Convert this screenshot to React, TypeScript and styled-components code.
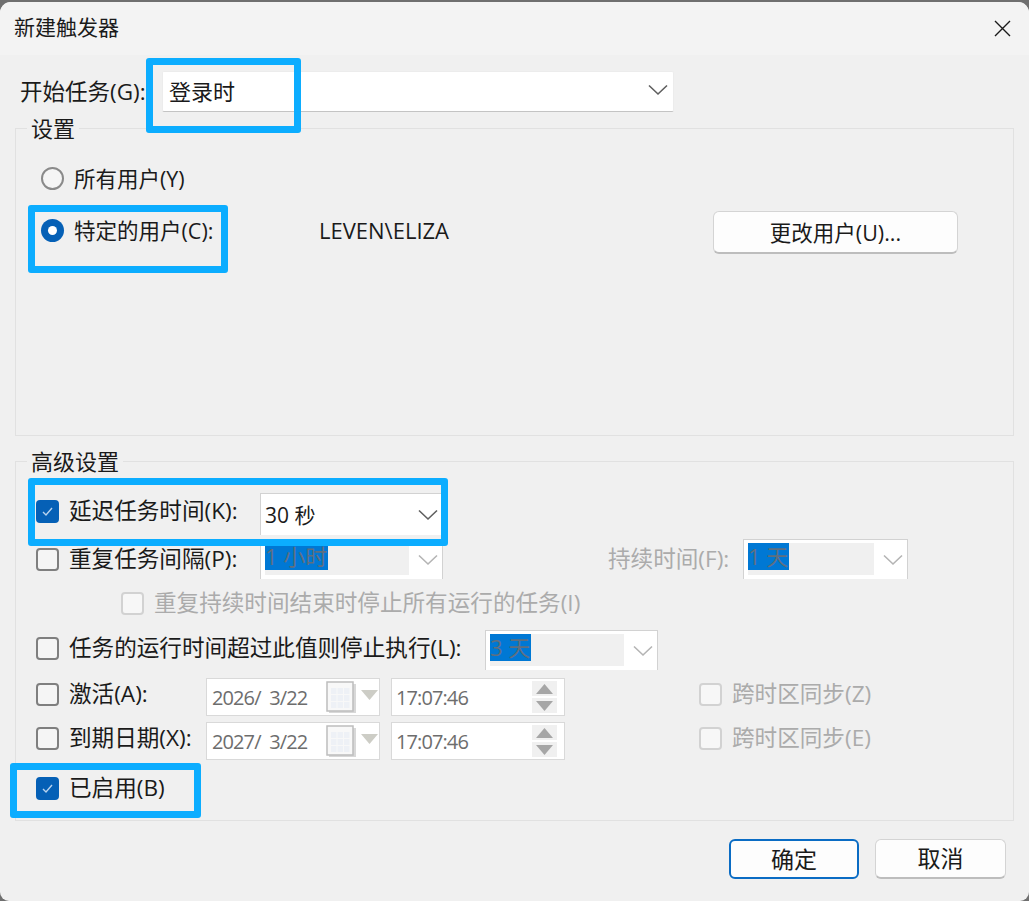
import React from "react";
import styled, { createGlobalStyle } from "styled-components";

const GlobalStyle = createGlobalStyle`
  html, body {
    margin: 0;
    padding: 0;
    background: #6f6f6f;
  }
  body {
    font-family: "Open Sans", "Noto Sans CJK SC", sans-serif;
    font-size: 21px;
    color: #1a1a1a;
  }
`;

const Page = styled.div`
  position: relative;
  width: 1029px;
  height: 901px;
  padding-top: 2px;
  box-sizing: border-box;
  overflow: hidden;
`;

const Window = styled.div`
  height: 899px;
  background: #f0f0f0;
  border-radius: 11px 11px 9px 9px;
  overflow: hidden;
  display: flex;
  flex-direction: column;
`;

const TitleBar = styled.div`
  height: 53px;
  flex: none;
  background: #f3f3f3;
  display: flex;
  align-items: center;
  justify-content: space-between;
  padding: 0 18px 0 14px;
  font-size: 21px;
`;

const TitleText = styled.span`
  position: relative;
  top: -3px;
`;

const Content = styled.div`
  padding: 16px 15px 0;
  display: flex;
  flex-direction: column;
`;

const TaskRow = styled.div`
  height: 41px;
  display: flex;
  align-items: center;
  padding-left: 5px;
`;

const TaskLabel = styled.div`
  width: 142px;
  flex: none;
  position: relative;
  top: -1px;
  font-size: 22.5px;
  white-space: nowrap;
`;

const Select = styled.div`
  width: 512px;
  height: 41px;
  box-sizing: border-box;
  background: #fff;
  border: 1px solid #ececec;
  border-bottom-color: #c4c4c4;
  border-radius: 2px;
  display: flex;
  align-items: center;
  justify-content: space-between;
  padding: 0 5px 3px 6px;
  font-size: 22px;
`;

const Group = styled.div<{ $top: number; $height: number }>`
  margin-top: ${(p) => p.$top}px;
  height: ${(p) => p.$height}px;
  box-sizing: border-box;
  border: 1px solid #e1e1e1;
`;

const Legend = styled.div`
  width: fit-content;
  margin: -15px 0 0 11px;
  padding: 0 4px;
  height: 30px;
  line-height: 28px;
  background: #f0f0f0;
  font-size: 22px;
`;

const RadioRow = styled.div<{ $height: number }>`
  height: ${(p) => p.$height}px;
  display: flex;
  align-items: center;
  padding-left: 25px;
`;

const Radio = styled.span<{ $on?: boolean }>`
  width: 23px;
  height: 23px;
  flex: none;
  box-sizing: border-box;
  border-radius: 50%;
  display: flex;
  align-items: center;
  justify-content: center;
  background: ${(p) => (p.$on ? "#0560b6" : "#f5f5f5")};
  border: ${(p) => (p.$on ? "none" : "2px solid #8a8a8a")};
  &::after {
    content: "";
    display: ${(p) => (p.$on ? "block" : "none")};
    width: 9px;
    height: 9px;
    border-radius: 50%;
    background: #fff;
  }
`;

const RadioLabel = styled.span<{ $width: number }>`
  width: ${(p) => p.$width}px;
  flex: none;
  margin-left: 10px;
  font-size: 21.5px;
  white-space: nowrap;
  position: relative;
  top: -1px;
`;

const UserName = styled.span`
  width: 394px;
  flex: none;
  font-size: 22px;
`;

const Button = styled.button<{ $width: number; $height: number; $primary?: boolean; $drop?: number }>`
  width: ${(p) => p.$width}px;
  height: ${(p) => p.$height}px;
  margin-top: ${(p) => p.$drop ?? 0}px;
  box-sizing: border-box;
  flex: none;
  background: #fdfdfd;
  border: ${(p) => (p.$primary ? "2px solid #0a6cc4" : "1px solid #d4d4d4")};
  border-bottom: ${(p) => (p.$primary ? "2px solid #0a6cc4" : "2px solid #bdbdbd")};
  border-radius: 6px;
  font-family: inherit;
  font-size: ${(p) => (p.$drop ? "21.5px" : "23px")};
  color: #1a1a1a;
  padding: 0 0 ${(p) => (p.$drop ? 0 : 3)}px;
`;

const Rows = styled.div`
  margin-top: 12px;
  padding-left: 20px;
`;

const Row = styled.div<{ $height: number }>`
  height: ${(p) => p.$height}px;
  display: flex;
  align-items: center;
`;

const Box = styled.span<{ $on?: boolean; $off?: boolean }>`
  width: 23px;
  height: 23px;
  flex: none;
  box-sizing: border-box;
  border-radius: 4px;
  display: flex;
  align-items: center;
  justify-content: center;
  background: ${(p) => (p.$on ? "#0560b6" : p.$off ? "#f7f7f7" : "#f5f5f5")};
  border: ${(p) => (p.$on ? "none" : p.$off ? "2px solid #d2d2d2" : "2px solid #7f7f7f")};
`;

const Label = styled.span<{ $width: number; $off?: boolean; $left?: number }>`
  width: ${(p) => p.$width}px;
  flex: none;
  white-space: nowrap;
  margin-left: ${(p) => p.$left ?? 10}px;
  color: ${(p) => (p.$off ? "#ababab" : "#1a1a1a")};
  font-size: 22.6px;
  position: relative;
  top: -2px;
`;

const Combo = styled.div<{ $width: number; $height: number; $shift?: number }>`
  width: ${(p) => p.$width}px;
  height: ${(p) => p.$height}px;
  margin-top: ${(p) => p.$shift ?? 0}px;
  flex: none;
  box-sizing: border-box;
  background: #fff;
  border: 1px solid #d2d2d2;
  border-bottom: none;
  display: flex;
  align-items: center;
  justify-content: space-between;
  padding: 0 4px;
`;

const ComboValue = styled.span`
  position: relative;
  top: -1px;
`;

const ComboField = styled.span<{ $width: number }>`
  width: ${(p) => p.$width}px;
  height: 32px;
  margin-top: -2px;
  background: #f0f0f0;
  display: flex;
`;

const Selected = styled.span`
  background: #0078d4;
  color: #5f6f80;
  height: 27px;
  line-height: 27px;
  padding-right: 1px;
  white-space: nowrap;
  font-size: 22px;
`;

const Picker = styled.div<{ $width: number; $left?: number; $pad?: number }>`
  width: ${(p) => p.$width}px;
  height: 38px;
  margin-top: 6px;
  margin-left: ${(p) => p.$left ?? 0}px;
  flex: none;
  box-sizing: border-box;
  background: #fff;
  border: 1px solid #d9d9d9;
  display: flex;
  align-items: center;
  justify-content: space-between;
  padding: 0 6px 0 ${(p) => p.$pad ?? 5}px;
  color: #6d6d6d;
  font-size: 20px;
  letter-spacing: -0.9px;
  white-space: pre;
`;

const PickerIcons = styled.span`
  display: flex;
  align-items: flex-start;
  gap: 4px;
  margin-right: -5px;
`;

const PickerArrow = styled.span`
  display: flex;
  margin-top: 9px;
`;

const Spinner = styled.span`
  display: flex;
  flex-direction: column;
  gap: 2px;
  margin-right: 1px;
`;

const SpinButton = styled.span`
  width: 25px;
  height: 15px;
  background: #f0f0f0;
  display: flex;
  align-items: center;
  justify-content: center;
`;

const SubRowSpacer = styled.span`
  width: 85px;
  flex: none;
`;

const SyncBox = styled.span`
  margin-left: 134px;
  display: flex;
  align-items: center;
`;

const Footer = styled.div`
  margin-top: 18px;
  padding-right: 8px;
  display: flex;
  justify-content: flex-end;
  gap: 16px;
`;

const Highlight = styled.div<{ $x: number; $y: number; $w: number; $h: number }>`
  position: absolute;
  left: ${(p) => p.$x}px;
  top: ${(p) => p.$y}px;
  width: ${(p) => p.$w}px;
  height: ${(p) => p.$h}px;
  box-sizing: border-box;
  border: 7px solid #0cadff;
  border-radius: 3px;
`;

function Chevron({ off }: { off?: boolean }) {
  return (
    <svg width="20" height="12" viewBox="0 0 20 12">
      <polyline
        points="1,1.5 10,10 19,1.5"
        fill="none"
        stroke={off ? "#b4b4b4" : "#5f5f5f"}
        strokeWidth="1.6"
      />
    </svg>
  );
}

function Check() {
  return (
    <svg width="13" height="11" viewBox="0 0 13 11">
      <polyline points="2,6 5,9 11,2" fill="none" stroke="#b9d3ee" strokeWidth="1.4" />
    </svg>
  );
}

function Close() {
  return (
    <svg width="17" height="17" viewBox="0 0 17 17">
      <path d="M1 1L16 16M16 1L1 16" stroke="#1a1a1a" strokeWidth="1.4" fill="none" />
    </svg>
  );
}

function Calendar() {
  return (
    <svg width="31" height="33" viewBox="0 0 31 33">
      <rect x="3" y="3" width="27" height="29" fill="#d8d8d8" />
      <rect x="1" y="1" width="26" height="29" fill="#f8f8f8" stroke="#bdbdbd" strokeWidth="1.5" />
      {[0, 1, 2].map((r) =>
        [0, 1, 2].map((c) => (
          <rect key={`${r}-${c}`} x={5 + c * 6.5} y={7 + r * 7} width="5.5" height="6" fill="#eef1f6" />
        ))
      )}
    </svg>
  );
}

function Arrow({ up, color }: { up?: boolean; color: string }) {
  return (
    <svg width="17" height="10" viewBox="0 0 17 10">
      <polygon points={up ? "8.5,0 17,10 0,10" : "0,0 17,0 8.5,10"} fill={color} />
    </svg>
  );
}

function DateTime({ date }: { date: string }) {
  return (
    <>
      <Picker $width={174}>
        {date}
        <PickerIcons>
          <Calendar />
          <PickerArrow>
            <Arrow color="#cdcdc6" />
          </PickerArrow>
        </PickerIcons>
      </Picker>
      <Picker $width={174} $left={11} $pad={4}>
        17:07:46
        <Spinner>
          <SpinButton>
            <Arrow up color="#a6a6a6" />
          </SpinButton>
          <SpinButton>
            <Arrow color="#a6a6a6" />
          </SpinButton>
        </Spinner>
      </Picker>
    </>
  );
}

export default function App() {
  return (
    <Page>
      <GlobalStyle />
      <Window>
        <TitleBar>
          <TitleText>新建触发器</TitleText>
          <Close />
        </TitleBar>
        <Content>
          <TaskRow>
            <TaskLabel>开始任务(G):</TaskLabel>
            <Select>
              登录时
              <Chevron />
            </Select>
          </TaskRow>
          <Group $top={16} $height={308}>
            <Legend>设置</Legend>
            <RadioRow $height={68}>
              <Radio />
              <RadioLabel $width={200}>所有用户(Y)</RadioLabel>
            </RadioRow>
            <RadioRow $height={36}>
              <Radio $on />
              <RadioLabel $width={245}>特定的用户(C):</RadioLabel>
              <UserName>LEVEN\ELIZA</UserName>
              <Button $width={245} $height={43} $drop={4}>
                更改用户(U)...
              </Button>
            </RadioRow>
          </Group>
          <Group $top={25} $height={360}>
            <Legend>高级设置</Legend>
            <Rows>
              <Row $height={44}>
                <Box $on>
                  <Check />
                </Box>
                <Label $width={191}>延迟任务时间(K):</Label>
                <Combo $width={183} $height={42} $shift={6}>
                  <ComboValue>30 秒</ComboValue>
                  <Chevron />
                </Combo>
              </Row>
              <Row $height={52}>
                <Box />
                <Label $width={191}>重复任务间隔(P):</Label>
                <Combo $width={183} $height={40}>
                  <ComboField $width={144}>
                    <Selected>1 小时</Selected>
                  </ComboField>
                  <Chevron off />
                </Combo>
                <Label $off $width={135} $left={165}>
                  持续时间(F):
                </Label>
                <Combo $width={165} $height={40}>
                  <ComboField $width={126}>
                    <Selected>1 天</Selected>
                  </ComboField>
                  <Chevron off />
                </Combo>
              </Row>
              <Row $height={36}>
                <SubRowSpacer />
                <Box $off />
                <Label $off $width={440}>
                  重复持续时间结束时停止所有运行的任务(I)
                </Label>
              </Row>
              <Row $height={54}>
                <Box />
                <Label $width={416}>任务的运行时间超过此值则停止执行(L):</Label>
                <Combo $width={173} $height={40} $shift={4}>
                  <ComboField $width={134}>
                    <Selected>3 天</Selected>
                  </ComboField>
                  <Chevron off />
                </Combo>
              </Row>
              <Row $height={38}>
                <Box />
                <Label $width={137}>激活(A):</Label>
                <DateTime date="2026/  3/22" />
                <SyncBox>
                  <Box $off />
                  <Label $off $width={150}>
                    跨时区同步(Z)
                  </Label>
                </SyncBox>
              </Row>
              <Row $height={50}>
                <Box />
                <Label $width={137}>到期日期(X):</Label>
                <DateTime date="2027/  3/22" />
                <SyncBox>
                  <Box $off />
                  <Label $off $width={150}>
                    跨时区同步(E)
                  </Label>
                </SyncBox>
              </Row>
              <Row $height={50}>
                <Box $on>
                  <Check />
                </Box>
                <Label $width={120}>已启用(B)</Label>
              </Row>
            </Rows>
          </Group>
          <Footer>
            <Button $primary $width={130} $height={40}>
              确定
            </Button>
            <Button $width={131} $height={40}>
              取消
            </Button>
          </Footer>
        </Content>
      </Window>
      <Highlight $x={146} $y={58} $w={155} $h={75} />
      <Highlight $x={28} $y={205} $w={200} $h={68} />
      <Highlight $x={28} $y={478} $w={420} $h={68} />
      <Highlight $x={10} $y={763} $w={191} $h={55} />
    </Page>
  );
}
